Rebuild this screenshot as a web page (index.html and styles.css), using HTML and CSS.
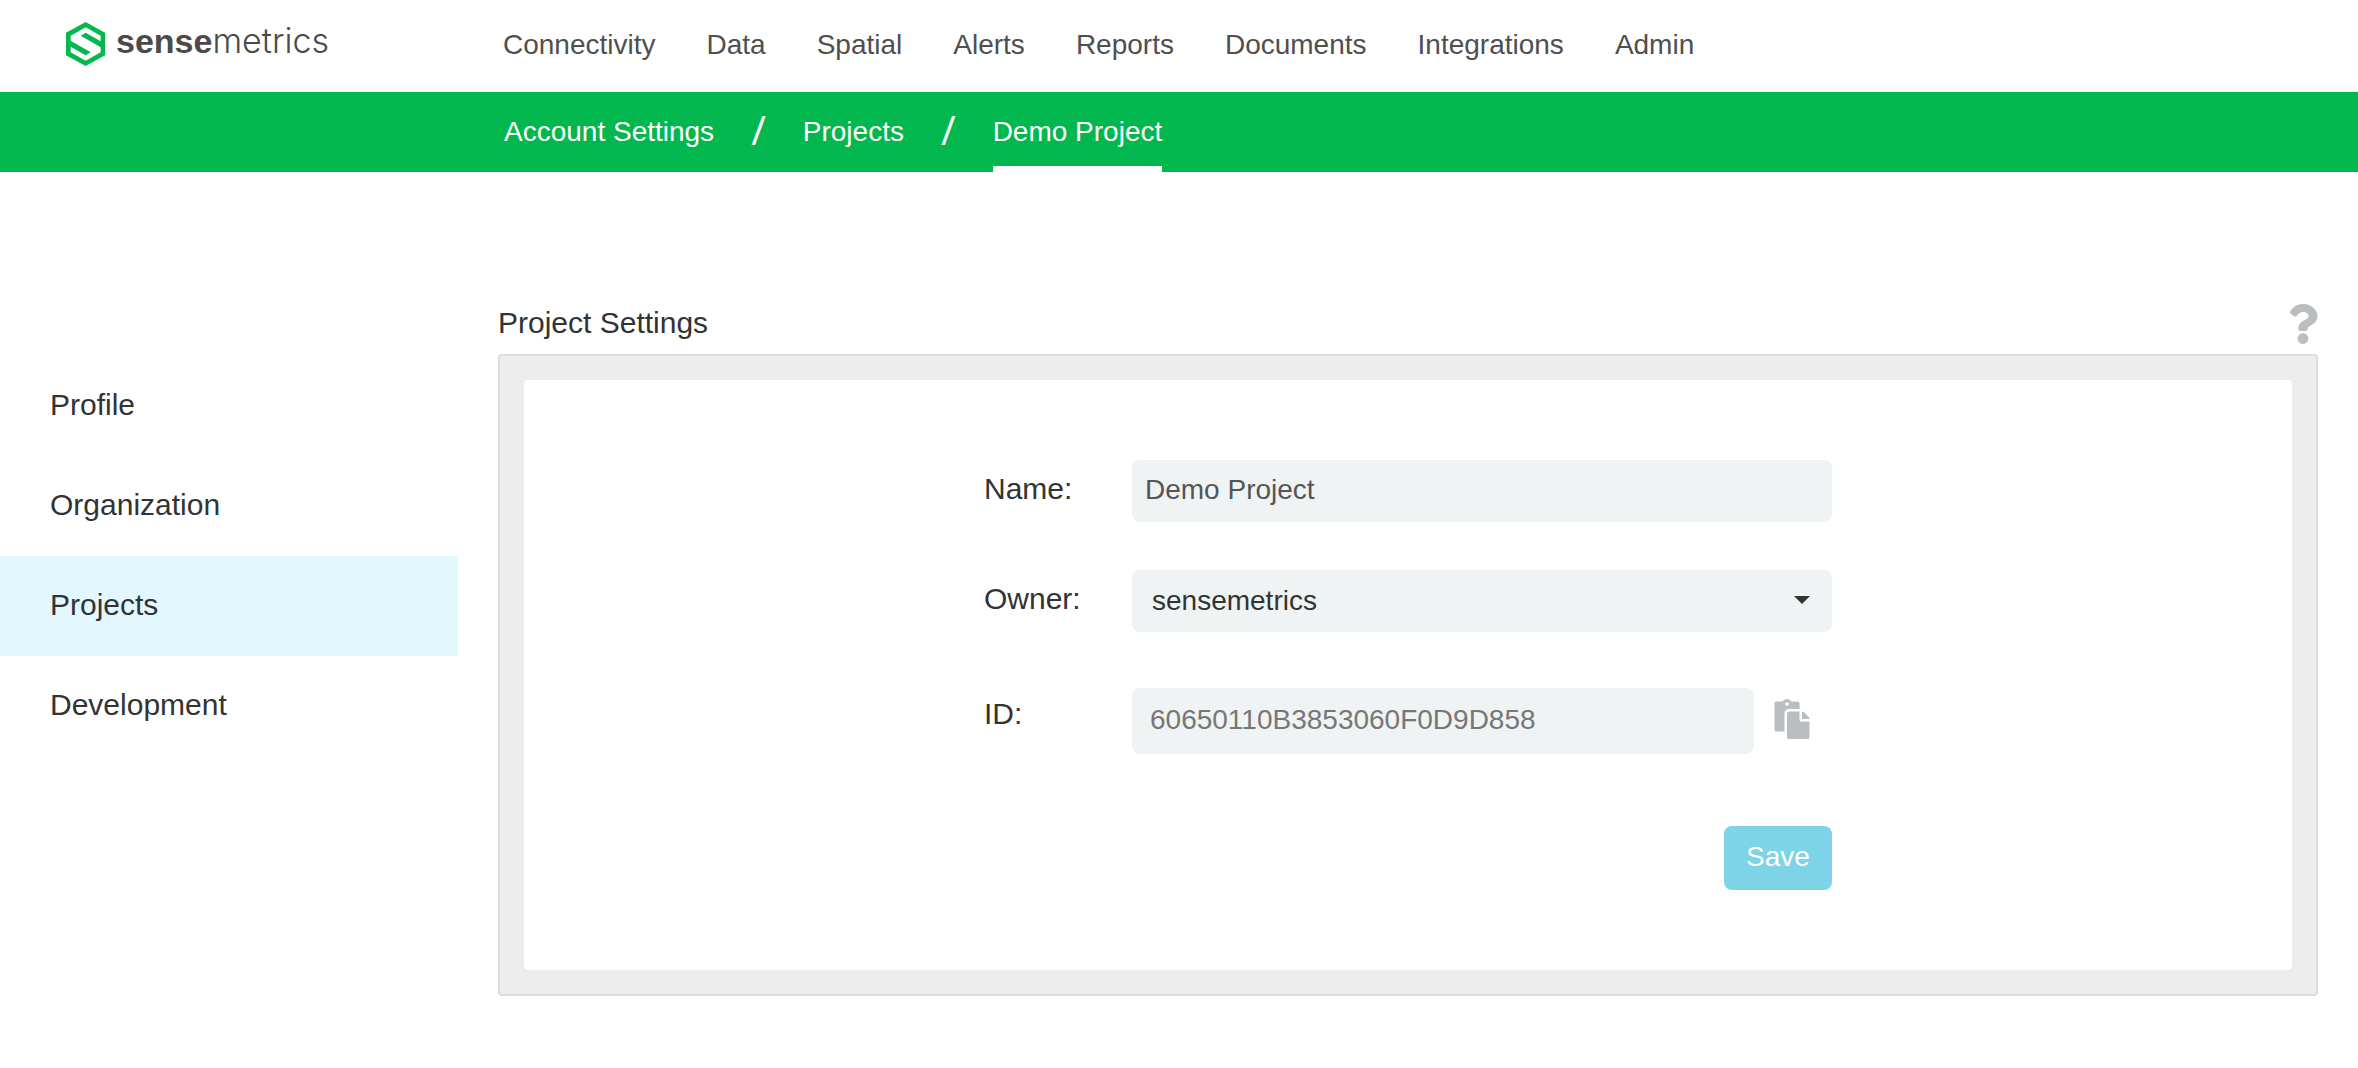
FILE: index.html
```html
<!DOCTYPE html>
<html lang="en">
<head>
<meta charset="utf-8">
<title>Project Settings</title>
<link rel="stylesheet" href="styles.css">
</head>
<body>
<header class="topbar">
  <a class="logo" href="#">
    <svg class="logo-mark" viewBox="78 66 117 132" aria-hidden="true">
      <path fill="#02b74d" d="M137 66L195 98V166L137 198L78 166V98Z"/>
      <path fill="#fff" d="M92 107L137 82L182 107V124L137 98L122 107L182 142V157L137 182L92 157V140L137 166L152 157L92 122Z"/>
    </svg>
    <span class="logo-text"><b>sense</b><span>metrics</span></span>
  </a>
  <nav class="main-nav">
    <a href="#">Connectivity</a>
    <a href="#">Data</a>
    <a href="#">Spatial</a>
    <a href="#">Alerts</a>
    <a href="#">Reports</a>
    <a href="#">Documents</a>
    <a href="#">Integrations</a>
    <a href="#">Admin</a>
  </nav>
</header>
<nav class="breadcrumb" aria-label="Breadcrumb">
  <a href="#">Account Settings</a>
  <span class="slash">/</span>
  <a href="#">Projects</a>
  <span class="slash">/</span>
  <a href="#" class="current" aria-current="page">Demo Project</a>
</nav>
<div class="layout">
  <nav class="side-nav">
    <a href="#">Profile</a>
    <a href="#">Organization</a>
    <a href="#" class="active">Projects</a>
    <a href="#">Development</a>
  </nav>
  <main class="content">
    <div class="panel-head">
      <h1>Project Settings</h1>
      <button class="icon-button" type="button" aria-label="Help">
        <svg class="help-icon" viewBox="0 0 384 512" aria-hidden="true">
          <path fill="#babec1" d="M202.021 0C122.202 0 70.503 32.703 29.914 91.026c-7.363 10.58-5.093 25.086 5.178 32.874l43.138 32.709c10.373 7.865 25.132 6.026 33.253-4.148 25.049-31.381 43.63-49.449 82.757-49.449 30.764 0 68.816 19.799 68.816 49.631 0 22.552-18.617 34.134-48.993 51.164-35.423 19.86-82.299 44.576-82.299 106.405V320c0 13.255 10.745 24 24 24h72.471c13.255 0 24-10.745 24-24v-5.773c0-42.86 125.268-44.645 125.268-160.627C377.504 66.256 286.902 0 202.021 0zM192 373.459c-38.196 0-69.271 31.075-69.271 69.271 0 38.195 31.075 69.27 69.271 69.27s69.271-31.075 69.271-69.271-31.075-69.27-69.271-69.27z"/>
        </svg>
      </button>
    </div>
    <section class="panel">
      <form class="form">
        <div class="row">
          <label for="name">Name:</label>
          <input class="field" id="name" type="text" value="Demo Project">
        </div>
        <div class="row">
          <label for="owner">Owner:</label>
          <div class="select-wrap">
            <select class="field" id="owner"><option>sensemetrics</option></select>
            <span class="caret"></span>
          </div>
        </div>
        <div class="row row-id">
          <label for="id">ID:</label>
          <input class="field" id="id" type="text" value="60650110B3853060F0D9D858" readonly>
          <button class="icon-button" type="button" aria-label="Copy ID">
            <svg class="paste-icon" viewBox="0 0 448 512" aria-hidden="true">
              <path fill="#babec1" d="M128 184c0-30.879 25.122-56 56-56h136V56c0-13.255-10.745-24-24-24h-80.61C204.306 12.89 183.637 0 160 0s-44.306 12.89-55.39 32H24C10.745 32 0 42.745 0 56v336c0 13.255 10.745 24 24 24h104V184zm32-144c13.255 0 24 10.745 24 24s-10.745 24-24 24-24-10.745-24-24 10.745-24 24-24zm184 248h104v200c0 13.255-10.745 24-24 24H184c-13.255 0-24-10.745-24-24V184c0-13.255 10.745-24 24-24h136v104c0 13.2 10.8 24 24 24zm104-38.059V256h-96v-96h6.059a24 24 0 0 1 16.97 7.029l65.941 65.941a24.002 24.002 0 0 1 7.03 16.971z"/>
            </svg>
          </button>
        </div>
        <div class="actions">
          <button class="save" type="submit">Save</button>
        </div>
      </form>
    </section>
  </main>
</div>
</body>
</html>
```

FILE: styles.css
```css
* {
  box-sizing: border-box;
}

body {
  margin: 0;
  background: #fff;
  color: #333;
  font-family: "Liberation Sans", Arial, sans-serif;
  font-size: 30px;
  line-height: 36px;
}

a {
  color: inherit;
  text-decoration: none;
}

input,
select,
button {
  font-family: inherit;
  font-size: 28px;
}

.topbar {
  display: flex;
  align-items: center;
  height: 92px;
  padding-left: 66px;
}

.logo {
  display: flex;
  align-items: center;
  gap: 11px;
  width: 437px;
  padding-bottom: 4px;
}

.logo-mark {
  width: 39px;
  height: 44px;
}

.logo-text {
  display: flex;
  align-items: baseline;
  padding-bottom: 6px;
  color: #4a4a4a;
  font-size: 34px;
}

.logo-text span {
  font-family: Inter, sans-serif;
  font-weight: 300;
}

.main-nav {
  display: flex;
  gap: 51px;
  padding-bottom: 2px;
  color: #4f4f4f;
  font-size: 28px;
}

.breadcrumb {
  display: flex;
  gap: 37px;
  height: 80px;
  padding-left: 504px;
  background: #02b74d;
  color: #fff;
  font-size: 28px;
  line-height: 80px;
}

.slash {
  font-family: "Open Sans", sans-serif;
  font-size: 40px;
  line-height: 76px;
}

.current {
  border-bottom: 6px solid #fff;
}

.layout {
  display: flex;
  gap: 40px;
  padding: 132px 40px 72px 0;
}

.side-nav {
  display: flex;
  flex-direction: column;
  width: 458px;
  padding-top: 52px;
}

.side-nav a {
  padding: 31px 50px 33px;
}

.side-nav .active {
  background: #e2f8fe;
}

.content {
  flex: 1;
}

.panel-head {
  display: flex;
  justify-content: space-between;
  height: 50px;
}

.panel-head h1 {
  margin: 0;
  font-size: 30px;
  font-weight: 400;
  line-height: 38px;
}

.icon-button {
  align-self: flex-start;
  display: flex;
  padding: 0;
  border: 0;
  background: none;
}

.help-icon {
  width: 30px;
  height: 40px;
}

.panel {
  padding: 24px;
  border: 2px solid #dcdcdc;
  border-radius: 4px;
  background: #ededed;
}

.form {
  display: flex;
  flex-direction: column;
  align-items: center;
  padding: 80px 0;
  border-radius: 4px;
  background: #fff;
}

.row {
  display: flex;
  width: 848px;
  margin-bottom: 48px;
}

.row label {
  width: 148px;
  padding-top: 11px;
}

.field {
  flex: 1;
  width: 100%;
  height: 62px;
  padding: 0 13px 2px;
  border: 0;
  border-radius: 8px;
  background: #eff3f4;
  color: #555;
}

.select-wrap {
  position: relative;
  flex: 1;
  display: flex;
}

select.field {
  appearance: none;
  padding-left: 20px;
  color: #333;
}

.caret {
  position: absolute;
  top: 26px;
  right: 22px;
  border: 8px solid transparent;
  border-top-color: #333;
  border-bottom: 0;
  pointer-events: none;
}

.row-id {
  margin-bottom: 72px;
  padding: 8px 22px 0 0;
}

.row-id label {
  padding-top: 8px;
}

.row-id .field {
  height: 66px;
  margin-right: 20px;
  padding-left: 18px;
  color: #777;
}

.row-id .icon-button {
  padding-top: 11px;
}

.paste-icon {
  width: 36px;
  height: 40px;
}

.actions {
  display: flex;
  justify-content: flex-end;
  width: 848px;
}

.save {
  width: 108px;
  height: 64px;
  padding: 0 0 2px;
  border: 0;
  border-radius: 8px;
  background: #7dd3e8;
  color: #fff;
}
```
